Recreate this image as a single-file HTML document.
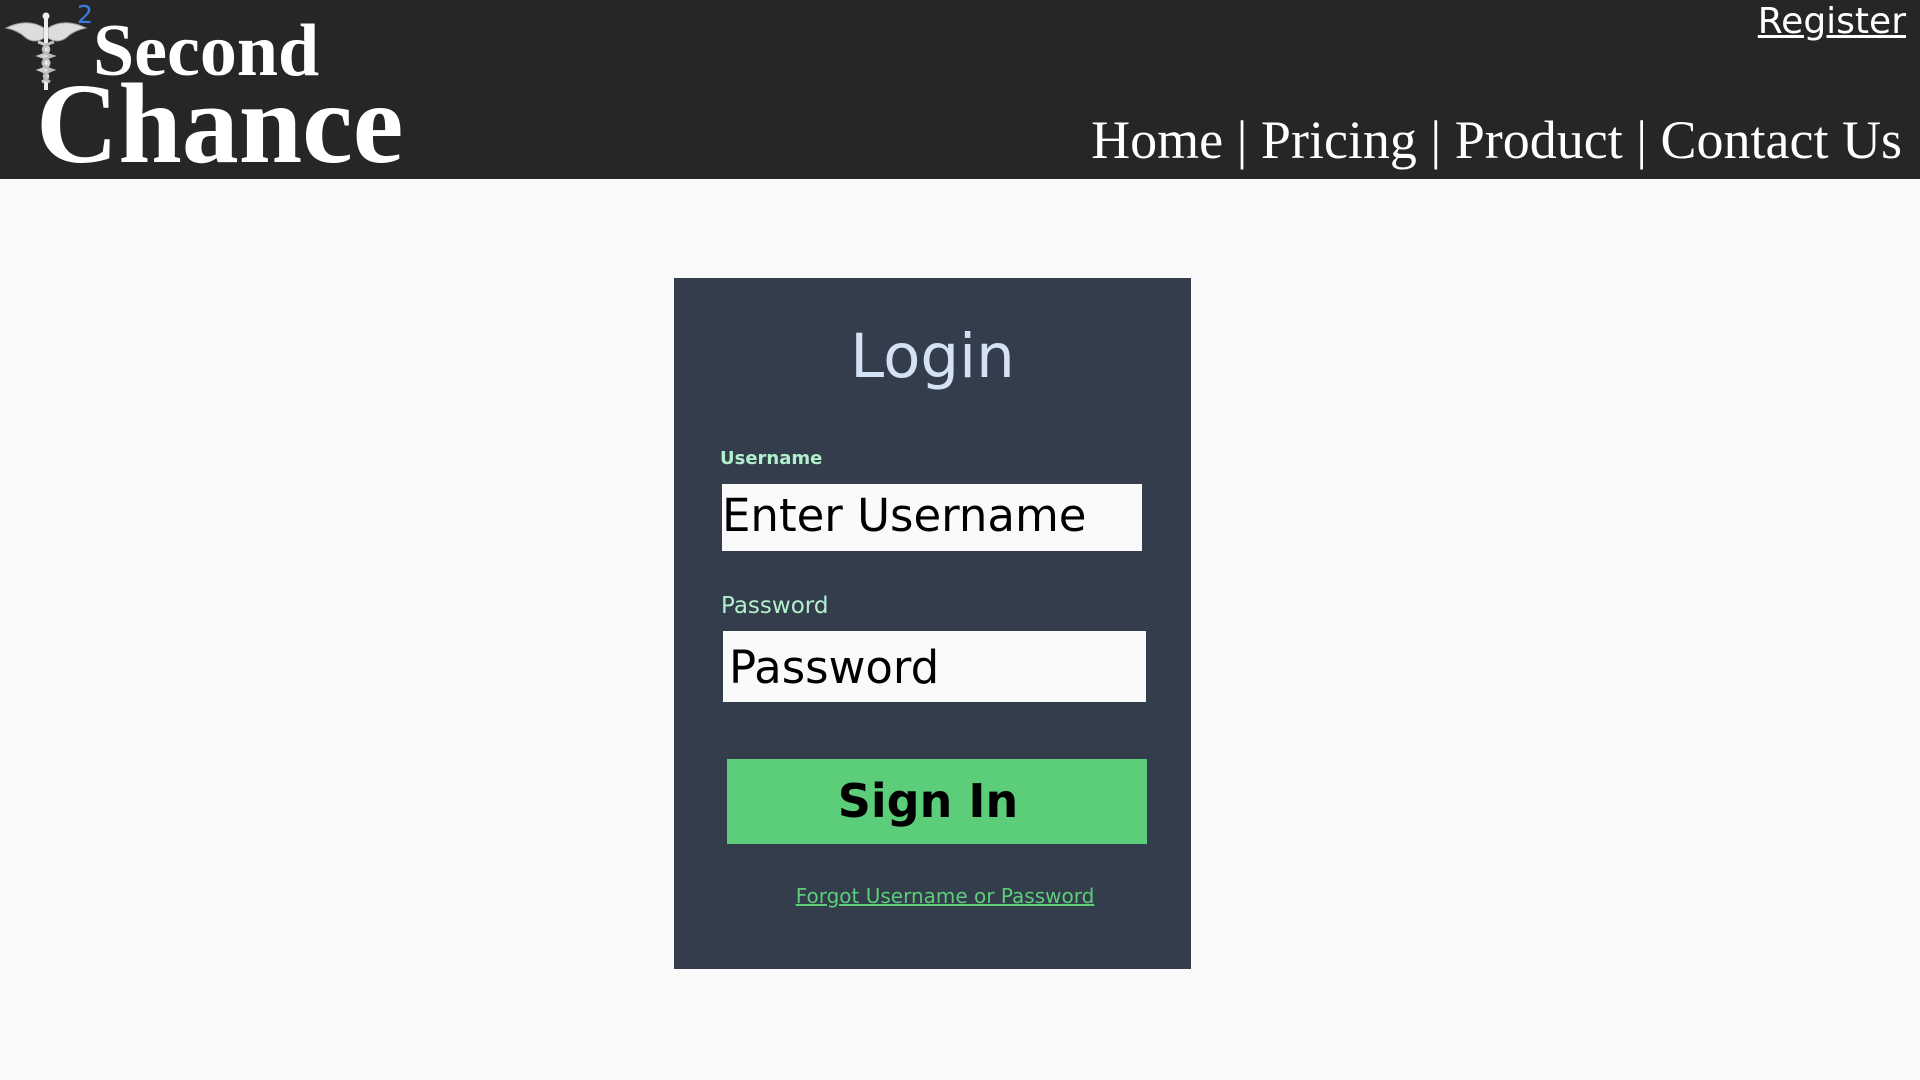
<!DOCTYPE html>
<html><head><meta charset="utf-8"><style>
*{margin:0;padding:0;box-sizing:border-box}
body{width:1920px;height:1080px;background:#f9f9f9;position:relative;overflow:hidden;font-family:"DejaVu Sans","Liberation Sans",sans-serif}
.hdr{position:absolute;left:0;top:0;width:1920px;height:179px;background:#262626}
.abs{position:absolute;white-space:nowrap}
.serif{font-family:"Liberation Serif",serif}
</style></head><body>
<div class="hdr">
  <svg class="abs" style="left:4px;top:12px" width="84" height="80" viewBox="0 0 84 80">
    <g fill="#ddd" stroke="#999" stroke-width="1">
      <path d="M40 16 C28 8 14 10 2 16 C12 18 18 22 22 26 C28 30 34 30 40 26 Z"/>
      <path d="M44 16 C56 8 70 10 82 16 C72 18 66 22 62 26 C56 30 50 30 44 26 Z"/>
    </g>
    <rect x="40" y="4" width="4" height="74" fill="#eee"/>
    <circle cx="42" cy="4" r="3.5" fill="#eee"/>
    <path d="M34 30 C48 34 48 40 36 44 C48 48 48 54 36 58 C46 62 46 66 38 70" stroke="#ccc" stroke-width="3" fill="none"/>
    <path d="M50 30 C36 34 36 40 48 44 C36 48 36 54 48 58 C38 62 38 66 46 70" stroke="#bbb" stroke-width="3" fill="none"/>
  </svg>
  <div class="abs" style="left:77px;top:0px;color:#3b7de8;font-size:25px">2</div>
  <div class="abs serif" style="left:93px;top:9px;color:#fff;font-size:74px;font-weight:bold;line-height:84px">Second</div>
  <div class="abs serif" style="left:36px;top:67px;color:#fff;font-size:114px;font-weight:bold;line-height:114px">Chance</div>
  <div class="abs" style="right:14px;top:0px;color:#fff;font-size:36px;text-decoration:underline;line-height:44px">Register</div>
  <div class="abs serif" style="right:18px;top:107px;color:#fff;font-size:54px;line-height:66px">Home | Pricing | Product | Contact Us</div>
</div>
<div class="abs" style="left:674px;top:278px;width:517px;height:691px;background:#333d4c">
  <div class="abs" style="left:0;width:517px;text-align:center;top:43px;font-size:61px;color:#d3e2f5;line-height:72px">Login</div>
  <div class="abs" style="left:46px;top:170px;font-size:18px;font-weight:bold;color:#b2f0cc">Username</div>
  <div class="abs" style="left:48px;top:206px;width:420px;height:67px;background:#fafafa;font-size:45px;line-height:64px;color:#000;padding-left:0px">Enter Username</div>
  <div class="abs" style="left:47px;top:315px;font-size:23px;color:#b2f0cc">Password</div>
  <div class="abs" style="left:49px;top:353px;width:423px;height:71px;background:#fafafa;font-size:45px;line-height:74px;color:#000;padding-left:6px">Password</div>
  <div class="abs" style="left:53px;top:481px;width:420px;height:85px;background:#5ccd78;font-size:46px;font-weight:bold;line-height:84px;color:#000;text-align:center;padding-right:18px">Sign In</div>
  <div class="abs" style="left:0;width:517px;padding-left:25px;text-align:center;top:606px;font-size:20px;color:#5ccd78;text-decoration:underline">Forgot Username or Password</div>
</div>
</body></html>
